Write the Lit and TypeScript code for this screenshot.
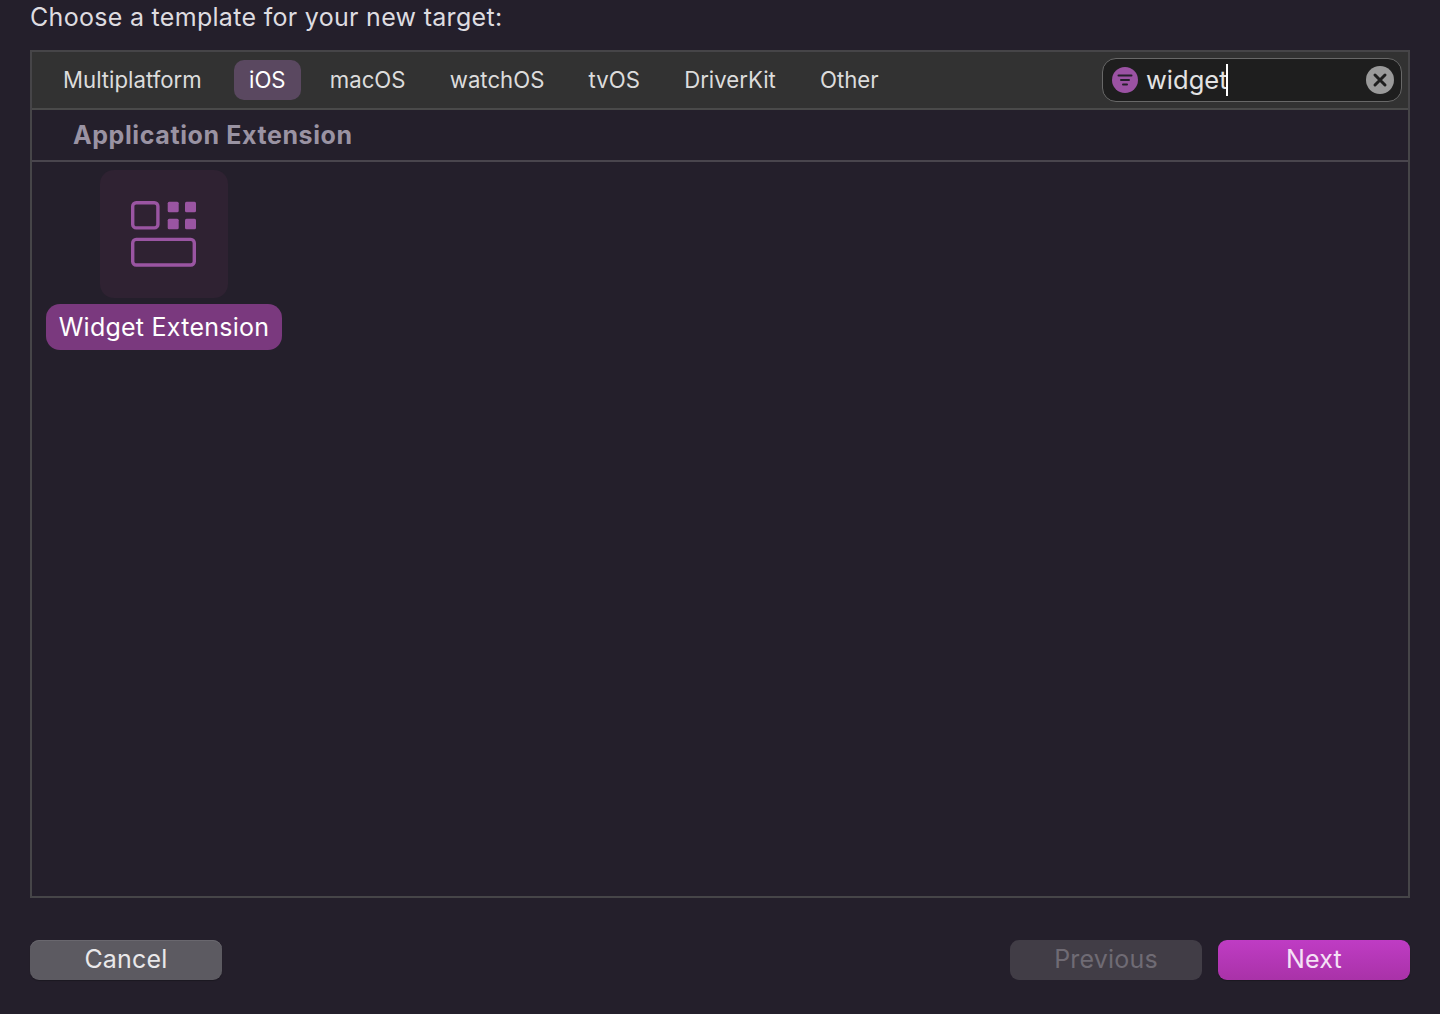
import { LitElement, html, css } from 'lit';
import { customElement } from 'lit/decorators.js';

const TABS = ['Multiplatform', 'iOS', 'macOS', 'watchOS', 'tvOS', 'DriverKit', 'Other'];

@customElement('app-root')
export class AppRoot extends LitElement {
    static override styles = css`
    :host {
      display: flex; flex-direction: column;
      box-sizing: border-box;
      height: 1014px;
      padding: 0 30px;
      background: #241f2b;
      font-family: Inter, "Liberation Sans", sans-serif;
      color: #e3e1e6;
    }

    .title {
      height: 50px; flex: none;
      padding-bottom: 16px; box-sizing: border-box;
      display: flex; align-items: center;
      font-size: 25px; line-height: 34px;
      letter-spacing: 0.3px;
      color: #dedce0;
    }

    .panel {
      flex: none;
      height: 848px; box-sizing: border-box;
      border: 2px solid #464548;
      display: flex; flex-direction: column;
    }

    .tabbar {
      flex: none; height: 58px; box-sizing: border-box;
      background: #323232;
      border-bottom: 2px solid #4a4a4a;
      display: flex; align-items: center;
      padding: 0 6px 0 16px;
    }

    .tab {
      height: 40px; box-sizing: border-box;
      padding: 0 15px 2px;
      display: flex; align-items: center;
      font-size: 22.2px;
      color: #dcdcdc;
      border-radius: 10px;
      margin-right: 14.2px;
    }
    .tab:first-child { padding-right: 18.2px; }
    .tab.on { background: #5a4860; color: #fff; }

    .search {
      margin-left: auto;
      width: 300px; height: 44px; box-sizing: border-box;
      background: #1e1e1e;
      border: 1px solid #686868;
      border-radius: 14px;
      display: flex; align-items: center;
      padding: 0 7px 0 9px;
      font-size: 25.5px;
      color: #e3e3e3;
    }
    .search svg { flex: none; display: block; }
    .query { margin: 0 0 2px 8px; position: relative; }
    .caret {
      position: absolute; right: 0; top: 0;
      width: 2px; height: 32px; background: #fff;
    }
    .clear { margin-left: auto; }

    .section {
      flex: none; height: 52px; box-sizing: border-box;
      border-bottom: 2px solid #49454d;
      padding: 0 0 0 41px;
      display: flex; align-items: center;
      font-size: 25px; font-weight: 700;
      letter-spacing: 0.6px;
      color: #9a93a3;
    }

    .grid { flex: 1; padding: 8px 14px; }

    .item { width: 236px; display: flex; flex-direction: column; align-items: center; gap: 6px; }
    .tile {
      width: 128px; height: 128px;
      background: #2f2232;
      border-radius: 14px;
      display: flex; align-items: center; justify-content: center;
    }
    .tile svg { display: block; }
    .label {
      width: 236px; height: 46px; box-sizing: border-box;
      background: #7a397e;
      border-radius: 14px;
      display: flex; align-items: center; justify-content: center;
      font-size: 25px; letter-spacing: 0.25px; color: #fff;
    }

    .footer {
      flex: none; margin-top: 42px;
      display: flex; gap: 16px;
    }
    .btn {
      width: 192px; height: 40px; box-sizing: border-box;
      padding-bottom: 2px;
      border-radius: 9px;
      display: flex; align-items: center; justify-content: center;
      font-size: 25px; letter-spacing: 0.2px;
    }
    .cancel {
      background: #5c5a61; color: #e9e8ea;
      margin-right: auto;
      box-shadow: inset 0 1px 0 #69676e, 0 1px 1px rgba(0,0,0,0.25);
    }
    .prev { background: #413d46; color: #6f6b74; }
    .next {
      background: linear-gradient(#bf3cc4, #a932a8);
      color: #f5e2f6;
      box-shadow: 0 1px 1px rgba(0,0,0,0.25);
    }
  `;

    override render() {
        return html`
      <div class="title">Choose a template for your new target:</div>
      <div class="panel">
        <div class="tabbar">
          ${TABS.map((t) => html`<div class="tab ${t === 'iOS' ? 'on' : ''}">${t}</div>`)}
          <div class="search">
            <svg width="26" height="26" viewBox="0 0 26 26">
              <circle cx="13" cy="13" r="13" fill="#9b52a3" />
              <path d="M6.5 8.5h13M9 13h8M11 17.5h4" stroke="#241f2b" stroke-width="2" stroke-linecap="round" />
            </svg>
            <span class="query">widget<span class="caret"></span></span>
            <svg class="clear" width="28" height="28" viewBox="0 0 28 28">
              <circle cx="14" cy="14" r="14" fill="#9a9a9a" />
              <path d="M9 9l10 10M19 9L9 19" stroke="#1e1e1e" stroke-width="3" stroke-linecap="round" />
            </svg>
          </div>
        </div>
        <div class="section">Application Extension</div>
        <div class="grid">
          <div class="item">
            <div class="tile">
              <svg width="66" height="66" viewBox="0 0 66 66" fill="none">
                <rect x="1.7" y="1.7" width="25.2" height="25.2" rx="3.5" stroke="#9a55a2" stroke-width="3.4" />
                <rect x="36.7" y="0.7" width="11" height="10.6" rx="1.5" fill="#9a55a2" />
                <rect x="54" y="0.7" width="11" height="10.6" rx="1.5" fill="#9a55a2" />
                <rect x="36.7" y="17.7" width="11" height="10.6" rx="1.5" fill="#9a55a2" />
                <rect x="54" y="17.7" width="11" height="10.6" rx="1.5" fill="#9a55a2" />
                <rect x="1.7" y="38.4" width="61.6" height="25.6" rx="3.5" stroke="#9a55a2" stroke-width="3.4" />
              </svg>
            </div>
            <div class="label">Widget Extension</div>
          </div>
        </div>
      </div>
      <div class="footer">
        <div class="btn cancel">Cancel</div>
        <div class="btn prev">Previous</div>
        <div class="btn next">Next</div>
      </div>
    `;
    }
}

declare global {
    interface HTMLElementTagNameMap { 'app-root': AppRoot; }
}
